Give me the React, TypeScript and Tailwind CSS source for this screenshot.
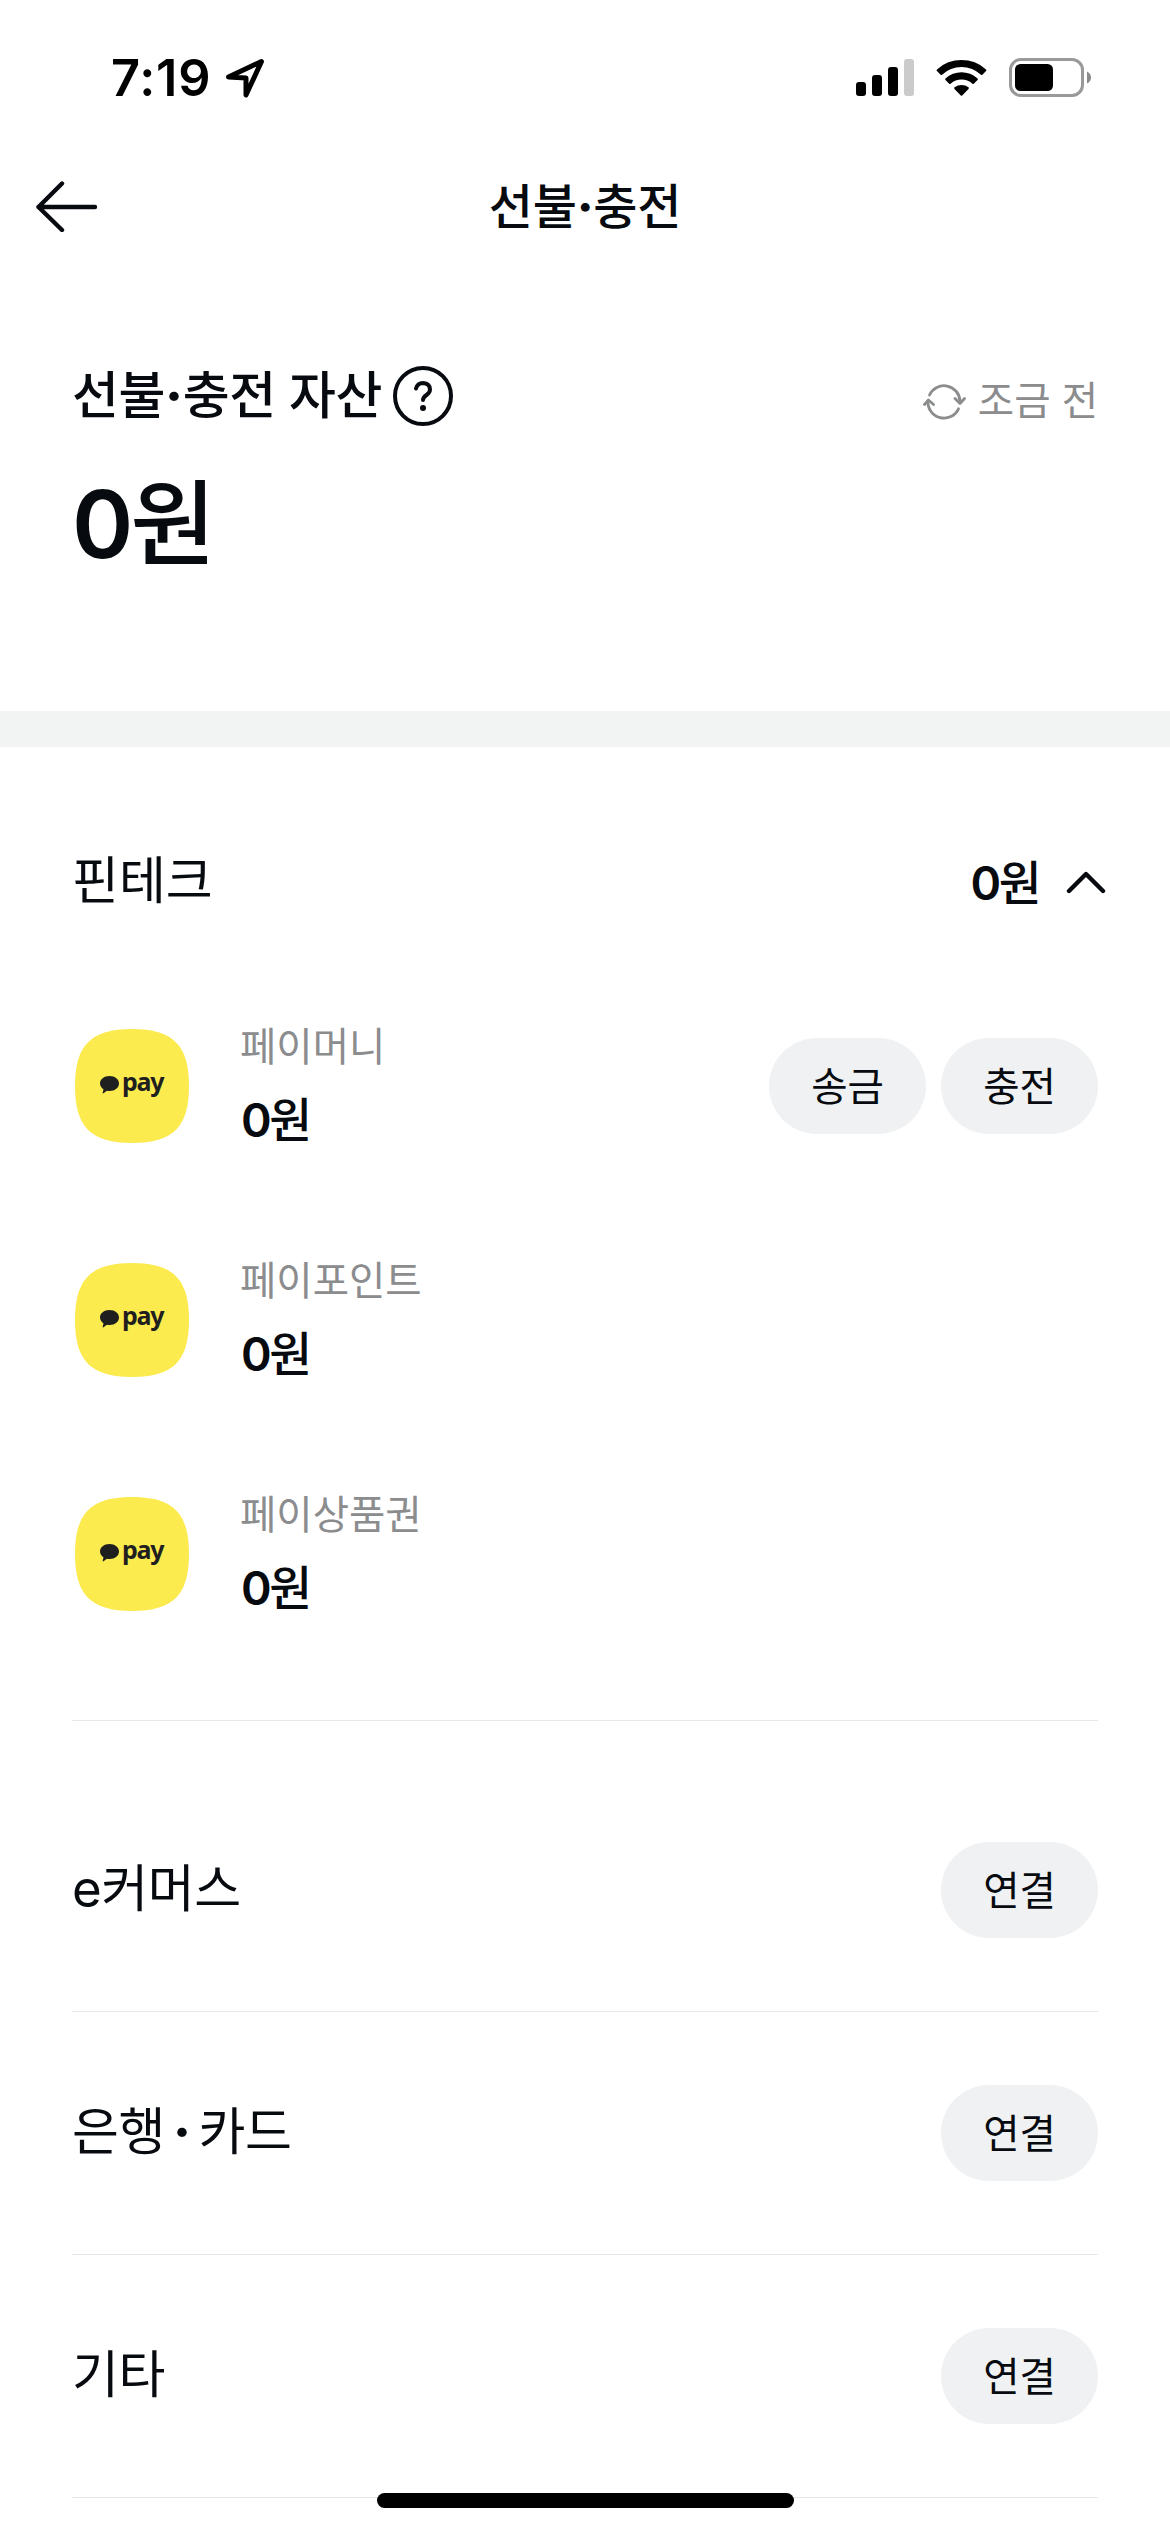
import type { ReactNode } from "react"

const payItems = [
  { name: "페이머니", amount: "0", actions: ["송금", "충전"] },
  { name: "페이포인트", amount: "0", actions: [] },
  { name: "페이상품권", amount: "0", actions: [] },
]

const categories = [["e커머스"], ["은행", "카드"], ["기타"]]

function StatusBar() {
  return (
    <div className="flex h-[156px] items-center justify-between pl-[111px] pr-[78px] text-black">
      <div className="flex items-center gap-[14px]">
        <span className="text-[50.500px] leading-none font-semibold tracking-[0.8px]">7:19</span>
        <svg width="40" height="40" viewBox="0 0 40 40" fill="none" stroke="currentColor" strokeWidth="5" strokeLinejoin="round">
          <path d="M3.500 19 36.500 3.500 21 37V20Z" />
        </svg>
      </div>
      <div className="flex items-center">
        <svg width="58" height="38" viewBox="0 0 58 38">
          <rect x="0" y="23" width="10" height="14" rx="3" />
          <rect x="16" y="16" width="10" height="21" rx="3" />
          <rect x="32" y="8" width="10" height="29" rx="3" />
          <rect x="48" y="0" width="10" height="37" rx="3" fill="#cbcbcb" />
        </svg>
        <svg className="ml-[22px]" width="52" height="38" viewBox="0 0 52 38">
          <path d="M1 10.500a36 36 0 0 1 49 0q.8.8 0 1.600l-3.600 3.600q-.7.6-1.400 0a28.500 28.500 0 0 0-39 0q-.7.6-1.400 0L1 12.100q-.8-.8 0-1.600Z" />
          <path d="M9.500 19.400a24 24 0 0 1 32 0q.8.8 0 1.600l-3.700 3.700q-.7.6-1.400 0a16.500 16.500 0 0 0-21.800 0q-.7.6-1.400 0l-3.700-3.700q-.8-.8 0-1.600Z" />
          <path d="M18.500 28.300a12 12 0 0 1 14 0q.8.8 0 1.600l-6.300 6.600q-.7.7-1.400 0l-6.300-6.600q-.8-.8 0-1.600Z" />
        </svg>
        <svg className="ml-[21px]" width="83" height="40" viewBox="0 0 83 40">
          <rect x="1.500" y="1.500" width="72" height="36" rx="10.500" fill="none" stroke="#999" strokeWidth="3" />
          <rect x="6" y="6" width="38" height="27" rx="5.500" />
          <path d="M78 13.500q4 2 4 6t-4 6Z" fill="#8a8a8a" />
        </svg>
      </div>
    </div>
  )
}

function Header() {
  return (
    <header className="grid h-[100px] grid-cols-[1fr_auto_1fr] items-center">
      <button className="ml-[35px] w-fit" aria-label="뒤로">
        <svg width="64" height="52" viewBox="0 0 64 52" fill="none" stroke="currentColor" strokeWidth="4.400" strokeLinecap="round" strokeLinejoin="round">
          <path d="M27 3.500 3.500 27 27 50M3.500 27H60" />
        </svg>
      </button>
      <h1 className="pt-px text-[48px] leading-[60px] font-medium tracking-[-0.200px]">
        선불<Dot />충전
      </h1>
    </header>
  )
}

// 가운뎃점만 더 굵게
function Dot() {
  return <span className="font-extrabold">·</span>
}

function Amount({ value }: { value: string }) {
  return (
    <span className="font-medium">
      <span className="font-semibold">{value}</span>원
    </span>
  )
}

function RefreshIcon() {
  return (
    <svg width="43" height="38" viewBox="0 0 43 38" fill="none" stroke="currentColor" strokeWidth="2.800" strokeLinecap="round" strokeLinejoin="round">
      <path d="M6.500 12A16 16 0 0 1 37 18M35.500 25.800A16 16 0 0 1 5 18" />
      <path d="M32 15.500 37 20.500 41.500 15.500M1.500 21.500 5.500 17 10.500 21.500" />
    </svg>
  )
}

function Pill({ children }: { children: ReactNode }) {
  return (
    <button className="h-24 w-[157px] rounded-full bg-[#eff1f3] pt-[3px] text-[39.500px] leading-none">{children}</button>
  )
}

function PayLogo() {
  return (
    <div className="relative size-[114px] text-[#1f1f1f]">
      <svg className="absolute inset-0" width="114" height="114" viewBox="0 0 114 114">
        <path d="M57 0C98 0 114 16 114 57S98 114 57 114 0 98 0 57 16 0 57 0Z" fill="#fbeb4e" />
        <path d="M34.500 47c5.500 0 9.500 3.200 9.500 7.500S40 62 34.500 62q-1.500 0-2.600-.2L28.500 64.300q-1 .5-.8-.6L28.500 60.300C26.500 59 25 57 25 54.500c0-4.300 4-7.500 9.500-7.500Z" fill="currentColor" />
      </svg>
      <span className="absolute left-[47px] top-[36px] font-['Noto_Sans'] text-[25px] leading-[32px] font-bold tracking-[-1.300px]">pay</span>
    </div>
  )
}

export default function App() {
  return (
    <div className="relative h-[2532px] w-[1170px] overflow-hidden bg-white font-['Inter','Noto_Sans_CJK_KR',sans-serif] text-[#070a0f]">
      <StatusBar />
      <Header />

      {/* 총 자산 */}
      <section className="h-[455px] px-[72px] pt-[110px]">
        <div className="flex h-[60px] items-center justify-between">
          <div className="flex items-center gap-[11px]">
            <h2 className="text-[51px] leading-[60px] font-medium tracking-[-0.400px]">
              선불<Dot />충전 자산
            </h2>
            <svg width="60" height="60" viewBox="0 0 60 60" fill="none" stroke="currentColor" strokeWidth="4" strokeLinecap="round" strokeLinejoin="round">
              <circle cx="30" cy="30" r="28" />
              <path d="M23 22.500Q24.500 17 30 17q7 .5 7 6.500 0 3-3.500 5.500T30 34" />
              <circle cx="30" cy="42" r="3" fill="currentColor" stroke="none" />
            </svg>
          </div>
          <div className="flex items-center gap-[12px] pt-[11px] text-[#8b8c8e]">
            <RefreshIcon />
            <span className="text-[39.500px] leading-none">조금 전</span>
          </div>
        </div>
        <p className="mt-[52px] text-[93px] leading-[92px] tracking-[-3px]">
          <Amount value="0" />
        </p>
      </section>

      <div className="h-9 bg-[#f2f4f4]" />

      {/* 핀테크 */}
      <section className="px-[72px] pt-[105px]">
        <div className="flex h-[60px] items-center justify-between">
          <h3 className="pb-[4px] text-[51px] leading-none">핀테크</h3>
          <div className="-mr-[9px] flex items-center gap-[26px]">
            <span className="pt-[2px] text-[46.500px] leading-none tracking-[-2.500px]">
              <Amount value="0" />
            </span>
            <svg width="42" height="24" viewBox="0 0 42 24" fill="none" stroke="currentColor" strokeWidth="4.400" strokeLinecap="round" strokeLinejoin="round">
              <path d="M4 21 21 4 38 21" />
            </svg>
          </div>
        </div>
        <ul className="mt-[117px] flex flex-col gap-[120px]">
          {payItems.map((item) => (
            <li key={item.name} className="flex h-[114px] items-center pl-[3px]">
              <PayLogo />
              <div className="ml-[51px] flex flex-1 flex-col gap-[32px]">
                <span className="text-[39.500px] leading-[36px] text-[#8b8c8e]">{item.name}</span>
                <span className="pl-px text-[46.500px] leading-[46px] tracking-[-2.500px]">
                  <Amount value={item.amount} />
                </span>
              </div>
              <div className="flex gap-[15px]">
                {item.actions.map((action) => (
                  <Pill key={action}>{action}</Pill>
                ))}
              </div>
            </li>
          ))}
        </ul>
        <div className="mt-[109px] h-px bg-[#e7e8e9]" />
      </section>

      <ul className="px-[72px] pt-[48px]">
        {categories.map(([name, sub]) => (
          <li key={name} className="flex h-[243px] items-center justify-between border-b border-[#e7e8e9]">
            <span className="pb-[2px] text-[51px] leading-[60px] tracking-[-0.400px] [word-spacing:-6px]">
              {name}
              {sub && (
                <>
                  {" "}<Dot /> {sub}
                </>
              )}
            </span>
            <Pill>연결</Pill>
          </li>
        ))}
      </ul>

      {/* 홈 인디케이터 */}
      <div className="absolute bottom-[24px] left-[377px] h-[15px] w-[417px] rounded-full bg-black" />
    </div>
  )
}
